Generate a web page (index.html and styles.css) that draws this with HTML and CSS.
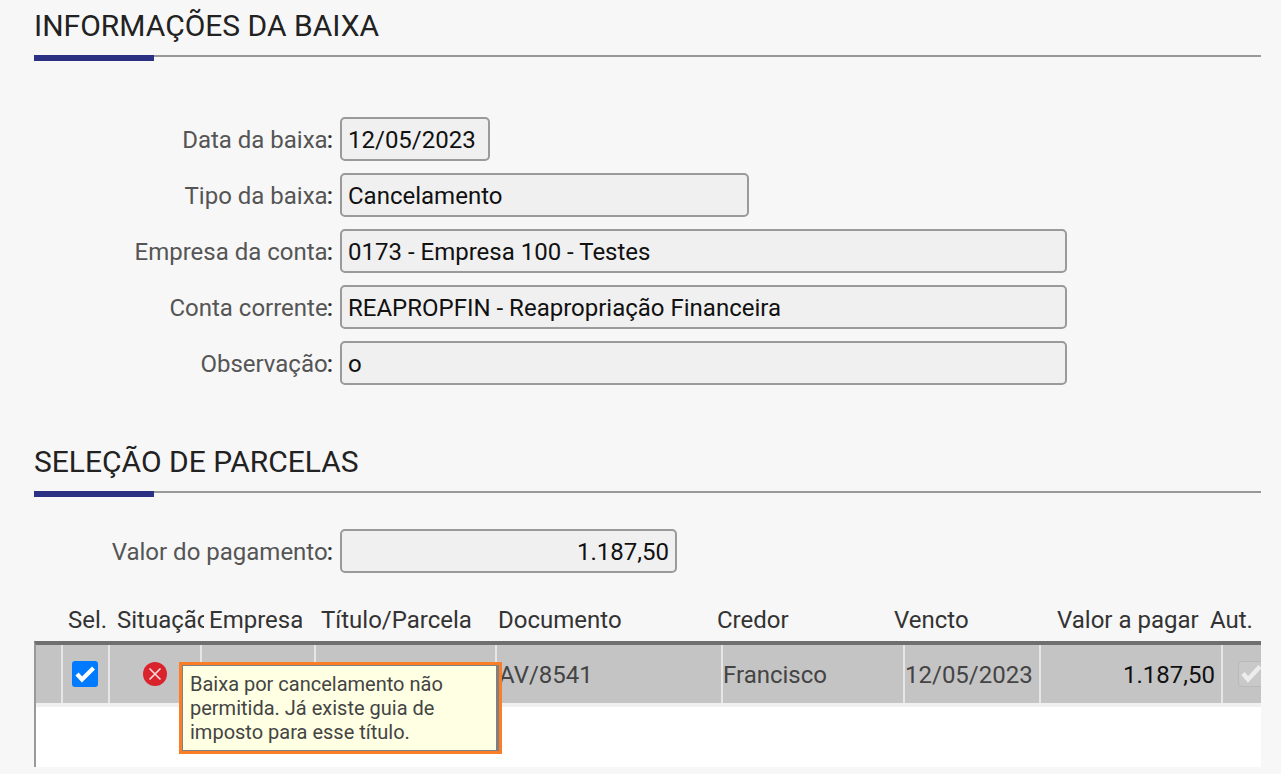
FILE: index.html
```html
<!DOCTYPE html>
<html lang="pt-BR">
<head>
<meta charset="utf-8">
<title>Informações da baixa</title>
<link rel="stylesheet" href="styles.css">
</head>
<body>
<main class="page">
  <section class="info">
    <h2 class="section-title">INFORMAÇÕES DA BAIXA</h2>
    <div class="form">
      <div class="form-row"><span class="label">Data da baixa<b class="colon">:</b></span><div class="field w-date">12/05/2023</div></div>
      <div class="form-row"><span class="label">Tipo da baixa<b class="colon">:</b></span><div class="field w-type">Cancelamento</div></div>
      <div class="form-row"><span class="label">Empresa da conta<b class="colon">:</b></span><div class="field w-full">0173 - Empresa 100 - Testes</div></div>
      <div class="form-row"><span class="label">Conta corrente<b class="colon">:</b></span><div class="field w-full">REAPROPFIN - Reapropriação Financeira</div></div>
      <div class="form-row"><span class="label">Observação<b class="colon">:</b></span><div class="field w-full">o</div></div>
    </div>
  </section>
  <section class="parcelas">
    <h2 class="section-title">SELEÇÃO DE PARCELAS</h2>
    <div class="form-row pay-row"><span class="label">Valor do pagamento<b class="colon">:</b></span><div class="field w-pay num">1.187,50</div></div>
    <div class="thead">
      <span>Sel.</span>
      <span class="clip">Situação</span>
      <span>Empresa</span>
      <span>Título/Parcela</span>
      <span>Documento</span>
      <span>Credor</span>
      <span>Vencto</span>
      <span>Valor a pagar</span>
      <span>Aut.</span>
    </div>
    <div class="tbody">
      <div class="trow">
        <div class="td"></div>
        <div class="td center sel">
          <svg viewBox="0 0 26 26" width="26" height="26"><rect width="26" height="26" rx="3" fill="#007bff"/><path d="M5 13l5 5.500L21.500 7" fill="none" stroke="#fff" stroke-width="4.200"/></svg>
        </div>
        <div class="td center">
          <svg viewBox="0 0 24 24" width="24" height="24"><circle cx="12" cy="12" r="12" fill="#d9232d"/><path d="M6.500 6.500l11 11M17.500 6.500l-11 11" stroke="#f6dcdc" stroke-width="1.600"/></svg>
        </div>
        <div class="td"></div>
        <div class="td"></div>
        <div class="td">AV/8541</div>
        <div class="td plain">Francisco</div>
        <div class="td plain">12/05/2023</div>
        <div class="td value">1.187,50</div>
        <div class="td aut">
          <svg viewBox="0 0 23 26" width="23" height="26"><rect x=".5" y=".5" width="30" height="25" rx="3.500" fill="#c9c9c9" stroke="#b9b9b9"/><path d="M5 12.500l5 6L22 5.500" fill="none" stroke="#ededed" stroke-width="4.400"/></svg>
        </div>
      </div>
      <div class="tooltip">Baixa por cancelamento não permitida. Já existe guia de imposto para esse título.</div>
    </div>
  </section>
</main>
</body>
</html>
```
FILE: styles.css
```css
* { box-sizing: border-box; }
html, body { margin: 0; height: 100%; }
body {
  background: #f7f7f7;
  font-family: Roboto, "Noto Sans", sans-serif;
  color: #222;
  overflow: hidden;
}
.page { padding: 0 20px 0 34px; }
.section-title {
  position: relative;
  margin: 0;
  height: 57px;
  padding-top: 8px;
  font-size: 30px;
  line-height: 36px;
  font-weight: 400;
  color: #222;
  border-bottom: 2px solid #999;
}
.section-title::after {
  content: "";
  position: absolute;
  left: 0;
  bottom: -6px;
  width: 120px;
  height: 6px;
  background: #2b3284;
}
.form { display: flex; flex-direction: column; gap: 12px; padding-top: 60px; }
.parcelas { padding-top: 51px; }
.form-row { display: flex; align-items: center; height: 44px; }
.label {
  width: 306px;
  padding: 2px 7px 0 0;
  text-align: right;
  font-size: 24px;
  color: #555;
  white-space: nowrap;
}
.colon { margin-left: -1px; font-weight: 500; color: #333; }
.field {
  height: 44px;
  padding: 0 6px;
  line-height: 42px;
  font-size: 24px;
  color: #111;
  background: #f0f0f0;
  border: 2px solid #9a9a9a;
  border-radius: 5px;
  white-space: nowrap;
}
.w-date { width: 150px; }
.w-type { width: 409px; }
.w-full { width: 727px; }
.w-pay { width: 337px; }
.num { text-align: right; }
.pay-row { margin-top: 36px; }
.thead {
  display: grid;
  grid-template-columns: 49px 92px 112px 177px 219px 177px 163px 153px 1fr;
  padding-left: 34px;
  margin-top: 30px;
  height: 38px;
  line-height: 34px;
  font-size: 24px;
  color: #333;
  white-space: nowrap;
}
.clip { width: 87px; overflow: hidden; }
.tbody {
  position: relative;
  height: 126px;
  background: #fff;
  border-top: 4px solid #6f6f6f;
  border-left: 2px solid #999;
}
.trow {
  display: grid;
  grid-template-columns: 27px 47px 92px 114px 181px 226px 182px 136px 182px 1fr;
  height: 62px;
  background: #f0f0f0;
  padding-bottom: 4px;
  overflow: hidden;
}
.td {
  display: flex;
  align-items: center;
  background: #c4c4c4;
  border-right: 2px solid #e6e6e6;
  padding: 2px 0 0 2px;
  font-size: 24px;
  color: #444;
  white-space: nowrap;
  min-width: 0;
}
.td.center { justify-content: center; padding: 0; }
.td.sel { padding-right: 2px; }
.td.plain { padding-left: 0; }
.td.value { justify-content: flex-end; padding-right: 6px; color: #111; }
.td.aut { border-right: 0; padding: 0 0 0 15px; overflow: hidden; }
.tooltip {
  position: absolute;
  left: 143px;
  top: 17px;
  width: 323px;
  height: 92px;
  padding: 7px 8px;
  background: #ffffe3;
  border: 3px solid #fb7d25;
  box-shadow: inset 1px 1px #808080, inset -3px -1px #808080;
  font-size: 20px;
  line-height: 24px;
  color: #444;
}
```
